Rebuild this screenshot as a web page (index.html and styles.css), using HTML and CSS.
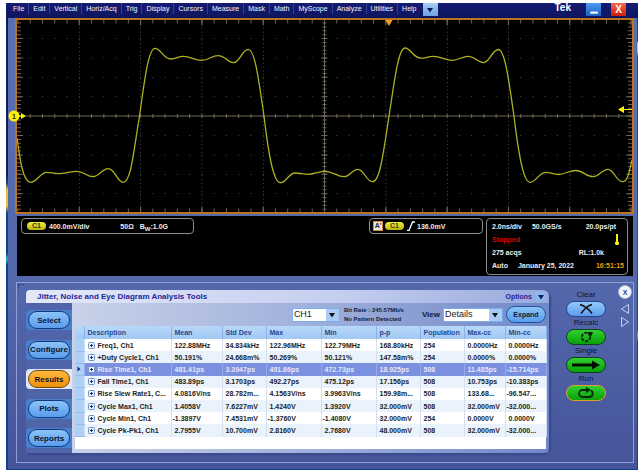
FILE: index.html
```html
<!DOCTYPE html>
<html lang="en">
<head>
  <meta charset="UTF-8" />
  <meta name="viewport" content="width=device-width, initial-scale=1.0"/>
  <title>Jitter, Noise and Eye Diagram Analysis</title>
  <link rel="stylesheet" href="styles.css">
</head>
<body>

  <svg class="defs" aria-hidden="true">
    <symbol id="plus" viewBox="0 0 7 7">
      <rect x="0.5" y="0.5" width="6" height="6" rx="1" fill="#eaf2fc" stroke="#6f8fc4"/>
      <path d="M2 3.5h3M3.5 2v3" stroke="#203060"/>
    </symbol>
    <symbol id="down" viewBox="0 0 6 6">
      <path d="M0 1h6L3 5.5z"/>
    </symbol>
  </svg>

  <div class="app">

    <header class="menubar">
      <nav class="menu">
        <button>File</button>
        <button>Edit</button>
        <button>Vertical</button>
        <button>Horiz/Acq</button>
        <button>Trig</button>
        <button>Display</button>
        <button>Cursors</button>
        <button>Measure</button>
        <button>Mask</button>
        <button>Math</button>
        <button>MyScope</button>
        <button>Analyze</button>
        <button>Utilities</button>
        <button>Help</button>
      </nav>
      <button class="win-btn more" aria-label="More"><svg class="arrow"><use href="#down"/></svg></button>
      <span class="brand">Tek</span>
      <button class="win-btn minimize" aria-label="Minimize"><svg viewBox="0 0 14 12"><path d="M4 9h7" stroke="#fff" stroke-width="2"/></svg></button>
      <button class="win-btn close" aria-label="Close">X</button>
    </header>

    <!-- Waveform -->
    <section class="scope">
      <svg class="graticule" viewBox="17 20 615 192" preserveAspectRatio="none">
        <g class="dots">
          <path d="M17.5 38.5H632M17.5 58H632M17.5 77.5H632M17.5 96.5H632M17.5 135.5H632M17.5 155H632M17.5 174.5H632M17.5 193.5H632" stroke-dasharray="1 11.26"/>
          <path d="M79.5 20V212M140.5 20V212M202 20V212M263.5 20V212M386 20V212M447.5 20V212M508.5 20V212M570 20V212" stroke-dasharray="1 2.88"/>
        </g>
        <g class="ticks">
          <path d="M17.5 21.5H632M17.5 210.5H632" stroke-width="4" stroke-dasharray="1 11.26"/>
          <path d="M78.8 22.5H632M78.8 209.5H632" stroke-width="6" stroke-dasharray="1 60.3"/>
          <path d="M19 22.5V212M630 22.5V212" stroke-width="4" stroke-dasharray="1 2.88"/>
          <path d="M20 38V212M629 38V212" stroke-width="6" stroke-dasharray="1 18.4"/>
          <path d="M17 116H632M324.5 20V212"/>
          <path d="M17.5 116H632" stroke-width="4" stroke-dasharray="1 11.26"/>
          <path d="M324.5 22.5V212" stroke-width="4" stroke-dasharray="1 2.88"/>
          <path d="M324.5 38V212" stroke-width="6" stroke-dasharray="1 18.4"/>
        </g>
        <path class="wave" d="M17 138C20 160 23 182.3 30.7 182.3C37 182.3 40 172.3 47 172.3C51 172.3 54 173.7 58.3 173.7C66 173.7 70 171.3 76.7 171.3C84 171.3 87 176.7 92.7 176.7C99 176.7 102 168.7 108.3 168.7C115 168.7 117 182.3 123.3 182.3C131 182.3 133.5 152 139.5 116C144 85 148 48.3 155 48.3C161 48.3 163 59 171 59C176 59 178 56.3 183.3 56.3C191 56.3 194 60.3 201.7 60.3C209 60.3 211 55.7 218.3 55.7C225 55.7 228 62.7 233.3 62.7C240 62.7 242 49.3 248.3 49.3C255 49.3 259 82 264 116C268 150 273 182.7 280.3 182.7C286 182.7 289 173 295 173C300 173 303 174.3 307.3 174.3C314 174.3 318 171.3 325 171.3C333 171.3 337 176.7 344 176.7C350 176.7 352 169.3 358 169.3C364 169.3 366 181.7 372.7 181.7C380 181.7 383.5 152 389 116C394 85 398 48 405 48C411 48 413 58.2 421 58.2C426 58.2 428 56.3 433.3 56.3C441 56.3 445 60.3 452.3 60.3C459 60.3 462 56.3 468.3 56.3C475 56.3 478 62.7 483.3 62.7C490 62.7 492 49.5 498.3 49.5C505 49.5 509 82 514 116C518 150 523 182.3 530 182.3C536 182.3 539 172.3 546 172.3C550 172.3 554 174.5 558.3 174.5C565 174.5 569 170.5 575.7 170.5C583 170.5 586 176.7 593 176.7C599 176.7 602 169.3 608 169.3C614 169.3 616 181.7 622.7 181.7C628 181.7 629 172 632 160"/>
        <path d="M385.5 20h7l-3.5 6z" fill="#ff9d1c"/>
        <path d="M618 109.5l6-3.5v3h8v1h-8v3z" fill="#ffef00"/>
      </svg>
      <div class="ch-marker">
        <svg viewBox="0 0 18 12">
          <path d="M11 5.5h2V3l5 3-5 3V6.5h-2z" fill="#ffef00"/>
          <circle cx="6" cy="6" r="5.5" fill="#ffef00"/>
        </svg>
        <span>1</span>
      </div>
    </section>

    <!-- Readouts -->
    <section class="readouts">
      <div class="readout channel">
        <span class="ch">C1</span>
        <span class="scale">400.0mV/div</span>
        <span>50Ω</span>
        <span class="bw">B<sub>W</sub>:1.0G</span>
      </div>
      <div class="readout trigger">
        <span class="trig-a">A'</span>
        <span class="ch">C1</span>
        <svg class="edge" viewBox="0 0 8 10"><path d="M0 9.5h2L5.5 1H8" fill="none" stroke="#fff" stroke-width="1.3"/></svg>
        <span>136.0mV</span>
      </div>
      <div class="readout acq">
        <div class="line"><span>2.0ns/div</span><span>50.0GS/s</span><span>20.0ps/pt</span></div>
        <div class="line"><span class="stopped">Stopped</span><svg class="thermo" viewBox="0 0 4 11"><path d="M1 0h2v7.5a2 2 0 1 1-2 0z" fill="#fff200"/></svg></div>
        <div class="line"><span>275 acqs</span><span class="rl">RL:1.0k</span></div>
        <div class="line"><span>Auto</span><span>January 25, 2022</span><span class="time">16:51:15</span></div>
      </div>
    </section>

    <!-- Analysis panel -->
    <section class="panel">
      <div class="tools">
        <div class="titlebar">
          <h1>Jitter, Noise and Eye Diagram Analysis Tools</h1>
          <button class="options">Options <span class="opt-box"><svg class="arrow"><use href="#down"/></svg></span></button>
        </div>

        <div class="tools-body">
          <nav class="tabs">
            <div class="tab"><button>Select</button></div>
            <div class="tab"><button>Configure</button></div>
            <div class="tab active"><button>Results</button></div>
            <div class="tab"><button>Plots</button></div>
            <div class="tab"><button>Reports</button></div>
          </nav>

          <div class="results">
            <div class="toolbar">
              <div class="select ch-select">
                <select id="channel" aria-label="Channel"><option>CH1</option></select>
                <svg class="arrow"><use href="#down"/></svg>
              </div>
              <div class="rate">Bit Rate : 245.57Mb/s<br>No Pattern Detected</div>
              <label for="view">View</label>
              <div class="select view-select">
                <select id="view"><option>Details</option></select>
                <svg class="arrow"><use href="#down"/></svg>
              </div>
              <button class="expand">Expand</button>
            </div>

            <div class="table-wrap">
              <table>
                <colgroup>
                  <col class="c-mark"><col class="c-desc"><col class="c-mean"><col class="c-std"><col class="c-max"><col class="c-min"><col class="c-pp"><col class="c-pop"><col class="c-cc"><col class="c-cc">
                </colgroup>
                <thead>
                  <tr><th></th><th>Description</th><th>Mean</th><th>Std Dev</th><th>Max</th><th>Min</th><th>p-p</th><th>Population</th><th>Max-cc</th><th>Min-cc</th></tr>
                </thead>
                <tbody>
                  <tr><td></td><td><svg class="plus"><use href="#plus"/></svg>Freq1, Ch1</td><td>122.88MHz</td><td>34.834kHz</td><td>122.96MHz</td><td>122.79MHz</td><td>168.80kHz</td><td>254</td><td>0.0000Hz</td><td>0.0000Hz</td></tr>
                  <tr><td></td><td><svg class="plus"><use href="#plus"/></svg>+Duty Cycle1, Ch1</td><td>50.191%</td><td>24.668m%</td><td>50.269%</td><td>50.121%</td><td>147.58m%</td><td>254</td><td>0.0000%</td><td>0.0000%</td></tr>
                  <tr class="selected"><td><svg class="row-arrow" viewBox="0 0 4 6"><path d="M0.5 0.5L3.5 3 0.5 5.5z"/></svg></td><td><svg class="plus"><use href="#plus"/></svg>Rise Time1, Ch1</td><td>481.41ps</td><td>3.3947ps</td><td>491.66ps</td><td>472.73ps</td><td>18.925ps</td><td>508</td><td>11.485ps</td><td class="neg">-15.714ps</td></tr>
                  <tr><td></td><td><svg class="plus"><use href="#plus"/></svg>Fall Time1, Ch1</td><td>483.89ps</td><td>3.1703ps</td><td>492.27ps</td><td>475.12ps</td><td>17.156ps</td><td>508</td><td>10.753ps</td><td class="neg">-10.383ps</td></tr>
                  <tr><td></td><td><svg class="plus"><use href="#plus"/></svg>Rise Slew Rate1, C...</td><td>4.0816V/ns</td><td>28.782m...</td><td>4.1563V/ns</td><td>3.9963V/ns</td><td>159.98m...</td><td>508</td><td>133.68...</td><td class="neg">-96.547...</td></tr>
                  <tr><td></td><td><svg class="plus"><use href="#plus"/></svg>Cycle Max1, Ch1</td><td>1.4058V</td><td>7.6227mV</td><td>1.4240V</td><td>1.3920V</td><td>32.000mV</td><td>508</td><td>32.000mV</td><td class="neg">-32.000...</td></tr>
                  <tr><td></td><td><svg class="plus"><use href="#plus"/></svg>Cycle Min1, Ch1</td><td class="neg">-1.3897V</td><td>7.4531mV</td><td class="neg">-1.3760V</td><td class="neg">-1.4080V</td><td>32.000mV</td><td>254</td><td>0.0000V</td><td>0.0000V</td></tr>
                  <tr><td></td><td><svg class="plus"><use href="#plus"/></svg>Cycle Pk-Pk1, Ch1</td><td>2.7955V</td><td>10.700mV</td><td>2.8160V</td><td>2.7680V</td><td>48.000mV</td><td>508</td><td>32.000mV</td><td class="neg">-32.000...</td></tr>
                </tbody>
              </table>
            </div>
          </div>
        </div>
      </div>

      <div class="controls">
        <label for="clear">Clear</label>
        <button id="clear" class="pill blue"><svg viewBox="0 0 38 14"><path d="M13 2.5c4 1 9 5 12 9M25 2.5c-4 1-8 5-11 9" fill="none" stroke="#111" stroke-width="1.5"/></svg></button>
        <label for="recalc">Recalc</label>
        <button id="recalc" class="pill"><svg viewBox="0 0 38 14"><circle cx="19" cy="7" r="4.2" fill="none" stroke="#062806" stroke-width="2" stroke-dasharray="3 1.4"/><path d="M20 2l6 0-2 5z" fill="#062806"/></svg></button>
        <label for="single">Single</label>
        <button id="single" class="pill"><svg viewBox="0 0 38 14"><path d="M5 5.5h20V2.5l8 4.5-8 4.5v-3H5z" fill="#021002"/></svg></button>
        <label for="run">Run</label>
        <button id="run" class="pill running"><svg viewBox="0 0 38 14"><path d="M20 4h-4.5a3.5 3.5 0 0 0 0 7h7a3.5 3.5 0 0 0 1.5-6.500" fill="none" stroke="#062806" stroke-width="1.8"/><path d="M19 1l5 3-5 3z" fill="#062806"/></svg></button>
      </div>

      <div class="side">
        <button class="dismiss" aria-label="Close panel">X</button>
        <button class="step" aria-label="Previous"><svg viewBox="0 0 10 12"><path d="M8.5 1.5v9L1.5 6z"/></svg></button>
        <button class="step" aria-label="Next"><svg viewBox="0 0 10 12"><path d="M1.5 1.5v9L8.5 6z"/></svg></button>
      </div>
    </section>

  </div>

</body>
</html>
```

FILE: styles.css
```css
* {
  box-sizing: border-box;
}

body {
  margin: 0;
  padding: 3px 2px 1px 6px;
  font-family: "Liberation Sans", Arial, sans-serif;
  font-size: 7px;
  line-height: 9px;
  font-weight: bold;
  background: #fff;
}

button, select {
  font: inherit;
  color: inherit;
  margin: 0;
  padding: 0;
  border: none;
  background: none;
  cursor: pointer;
}

svg {
  display: block;
}

.defs {
  position: absolute;
  width: 0;
  height: 0;
}

.arrow {
  width: 6px;
  height: 6px;
  fill: #0c1a5c;
}

.app {
  padding-bottom: 6px;
  border-bottom: 1px solid #123f8c;
  background:
    linear-gradient(#11186b 0 170px, #123f8c 180px, #e8c22c 187px 203px, #123f8c 210px 250px, #18b4d4 256px, #123f8c 262px) left / 2px 100% no-repeat,
    linear-gradient(#2c3c90 0 38px, #e8c05c 40px 48px, #2c4298 54px 325px, #18c4e4 332px, #123f8c 340px) right / 1px 100% no-repeat,
    linear-gradient(#5870b2, #5468ac 60%, #46549a);
}

/* Menu bar */
.menubar {
  display: flex;
  align-items: flex-start;
  height: 15px;
  padding-right: 12px;
  background: linear-gradient(#151b72, #0e155f);
  color: #f4f6ff;
}

.menu {
  display: flex;
  padding-left: 3px;
}

.menu button {
  padding: 0 4px;
  height: 11px;
  font-weight: normal;
  border-right: 1px solid #34408c;
}

.menu button:last-child {
  border-right: none;
}

.win-btn {
  width: 15px;
  height: 13px;
  display: flex;
  align-items: center;
  justify-content: center;
}

.more {
  margin-left: 2px;
  background: linear-gradient(#a8ccf4, #6ea4e4);
}

.brand {
  margin-left: auto;
  margin-right: 15px;
  font-size: 10px;
  color: #fff;
}

.minimize {
  margin-right: 10px;
  background: linear-gradient(#4c9cf0, #1c60c4);
}

.close {
  background: linear-gradient(#f86850, #cc1c08);
  color: #fff;
  font-size: 10px;
}

/* Waveform */
.scope {
  position: relative;
  margin: 0 4px 0 9px;
  border: 2px solid #bd741c;
  background: #000;
}

.graticule {
  width: 100%;
  height: 192px;
}

.dots path {
  fill: none;
  stroke: #484848;
}

.ticks path {
  fill: none;
  stroke: #6e6658;
}

.wave {
  fill: none;
  stroke: #aeb020;
  stroke-width: 1.3;
}

.ch-marker {
  position: absolute;
  left: -9px;
  top: 90px;
}

.ch-marker svg {
  width: 18px;
  height: 12px;
}

.ch-marker span {
  position: absolute;
  left: 4px;
  top: 2px;
  color: #222;
}

/* Readouts */
.readouts {
  display: flex;
  align-items: flex-start;
  height: 60px;
  margin: 2px 5px 0 11px;
  padding: 2px 5px 0 4px;
  background: #000;
  color: #ececec;
}

.readout {
  display: flex;
  align-items: center;
  height: 16px;
  border: 1px solid #8c8c8c;
  border-radius: 4px;
}

.channel {
  width: 173px;
  padding-left: 5px;
}

.ch {
  width: 19px;
  height: 8px;
  margin-right: 3px;
  border-radius: 4px;
  background: linear-gradient(#f2ee40, #b8b410);
  color: #3c3c00;
  line-height: 8px;
  text-align: center;
}

.scale {
  margin-right: auto;
}

.bw {
  margin: 0 25px 0 6px;
}

.bw sub {
  font-size: 6px;
  line-height: 0;
}

.trigger {
  width: 114px;
  margin-left: auto;
  margin-right: 3px;
  padding-left: 3px;
}

.trig-a {
  width: 10px;
  height: 10px;
  margin-right: 2px;
  border: 1px solid #d88a30;
  background: #e8e8e8;
  color: #222;
  line-height: 8px;
  text-align: center;
}

.edge {
  width: 8px;
  height: 10px;
  margin-right: 2px;
}

.acq {
  flex-direction: column;
  align-items: stretch;
  width: 142px;
  height: 57px;
  padding: 1px 3px 0 5px;
}

.line {
  display: flex;
  align-items: center;
  gap: 10px;
  height: 13px;
}

.line > :last-child {
  margin-left: auto;
}

.line:first-child {
  padding-right: 8px;
}

.stopped {
  color: #d40808;
}

.thermo {
  width: 4px;
  height: 11px;
  margin-right: 5px;
}

.rl {
  margin-right: 20px;
}

.time {
  color: #f09a18;
}

/* Analysis panel */
.panel {
  position: relative;
  display: flex;
  align-items: flex-start;
  margin: 6px 4px 0 10px;
  padding: 7px 1px 9px 9px;
  border: 1px solid #8fa0d8;
}

/* resize grip */
.panel::before {
  content: "";
  position: absolute;
  left: 1px;
  top: 1px;
  width: 5px;
  height: 5px;
  border-top: 1px dotted #2c3878;
  border-left: 1px dotted #2c3878;
}

.tools {
  flex: 1;
  min-width: 0;
  border-radius: 4px 6px 6px 0;
  box-shadow: 2px 2px 2px #3a488c;
}

.titlebar {
  display: flex;
  align-items: center;
  justify-content: space-between;
  height: 13px;
  padding: 0 3px 0 11px;
  border-radius: 4px 6px 0 0;
  background: linear-gradient(90deg, #e4e8f6, #c4cef0 60%, #98a8dc);
  color: #24249a;
}

.titlebar h1 {
  margin: 0;
  font-size: 8px;
}

.options {
  display: flex;
  align-items: center;
}

.opt-box {
  display: flex;
  align-items: center;
  justify-content: center;
  width: 10px;
  height: 9px;
  margin-left: 4px;
  background: #8ab8f0;
}

.tools-body {
  display: flex;
  background: #5064aa;
}

.tabs {
  display: flex;
  flex-direction: column;
  flex-shrink: 0;
  justify-content: space-between;
  width: 46px;
  padding: 7px 0 5px;
}

.tab {
  height: 20px;
  padding: 1px 2px;
  border-radius: 4px 0 0 4px;
  background: #4880cc;
}

.tab button {
  width: 100%;
  height: 18px;
  border: 1px solid #123a80;
  border-radius: 9px;
  background: linear-gradient(#8cc4f8, #5a9cec);
  color: #0a1430;
  font-size: 8px;
}

.tab.active {
  background: #dfe6f6;
}

.tab.active button {
  border-color: #6a4a10;
  background: linear-gradient(#ffb83c, #f09008);
}

.results {
  flex: 1;
  min-width: 0;
  padding: 0 3px 4px;
  border-radius: 0 0 6px 0;
  background: linear-gradient(90deg, #c8d2e8, #a0b0dc 50%, #7088c8);
}

.toolbar {
  display: flex;
  align-items: center;
  height: 23px;
  color: #101c3c;
}

.toolbar label {
  margin: 0 3px 0 18px;
  font-size: 8px;
}

.select {
  position: relative;
  height: 14px;
  border: 1px solid #7cacec;
  background: #fff;
}

.select select {
  width: 100%;
  height: 12px;
  padding-left: 1px;
  appearance: none;
  background: linear-gradient(#a8ccf4, #a8ccf4) right / 13px 100% no-repeat;
  font-size: 9px;
  font-weight: normal;
  color: #222;
}

.select .arrow {
  position: absolute;
  right: 4px;
  top: 3px;
  fill: #111;
  pointer-events: none;
}

.ch-select {
  width: 48px;
  margin-left: auto;
}

.view-select {
  width: 60px;
}

.rate {
  margin-left: 4px;
  font-size: 6px;
}

.expand {
  width: 40px;
  height: 17px;
  margin-left: 3px;
  border: 1px solid #1c50a4;
  border-radius: 9px;
  background: linear-gradient(#8cc4f8, #5a9cec);
}

.table-wrap {
  padding-bottom: 12px;
  background: #fff;
}

table {
  width: 100%;
  height: 111px;
  border-collapse: collapse;
  table-layout: fixed;
}

.c-mark { width: 9px; }
.c-desc { width: 87px; }
.c-mean { width: 51px; }
.c-std { width: 44px; }
.c-max { width: 55px; }
.c-min { width: 55px; }
.c-pp { width: 44px; }
.c-pop { width: 44px; }
.c-cc { width: 41px; }

th, td {
  padding: 0 0 0 3px;
  text-align: left;
  white-space: nowrap;
  border-right: 1px solid #d4e0f0;
}

th {
  height: 13px;
  background: linear-gradient(#b8d8f8, #a0c8f4);
  border-color: #8ab4e8;
  color: #284890;
}

tbody tr:nth-child(even) {
  background: #eaf2fc;
}

td {
  color: #1c1c1c;
}

td:first-child {
  padding: 0;
  background: #acd0f6;
  border-bottom: 1px solid #94bcec;
}

tbody tr.selected {
  background: #7c90e0;
}

.selected td {
  color: #e4e8fc;
  border-right-color: #98a8e8;
}

td.neg {
  padding-left: 1px;
}

.plus {
  display: inline-block;
  width: 7px;
  height: 7px;
  margin-right: 3px;
  vertical-align: -1px;
}

.row-arrow {
  width: 4px;
  height: 6px;
  margin: auto;
  fill: #102a80;
}

/* Run controls */
.controls {
  display: flex;
  flex-direction: column;
  flex-shrink: 0;
  align-items: center;
  width: 40px;
  margin-left: 17px;
}

.controls label {
  height: 11px;
  line-height: 10px;
  font-size: 8px;
  font-weight: normal;
  color: #0c1434;
}

.pill {
  width: 40px;
  height: 16px;
  margin-bottom: 1px;
  border: 1px solid #0c4420;
  border-radius: 8px;
  background: linear-gradient(#30d030, #08a008);
}

.pill.blue {
  border-color: #1c4890;
  background: linear-gradient(#94c8fa, #5c9cec);
}

.pill.running {
  border-color: #e0a030;
}

.pill svg {
  width: 38px;
  height: 14px;
}

.side {
  display: flex;
  flex-direction: column;
  flex-shrink: 0;
  align-items: center;
  width: 14px;
  margin-left: 12px;
}

.dismiss {
  width: 14px;
  height: 14px;
  margin: -5px 0 4px;
  border: 1px solid #a8b4d8;
  border-radius: 50%;
  background: #f4f6fc;
  color: #283c88;
}

.step {
  margin-bottom: 1px;
}

.step svg {
  width: 10px;
  height: 12px;
  fill: none;
  stroke: #c4d0f4;
}
```
